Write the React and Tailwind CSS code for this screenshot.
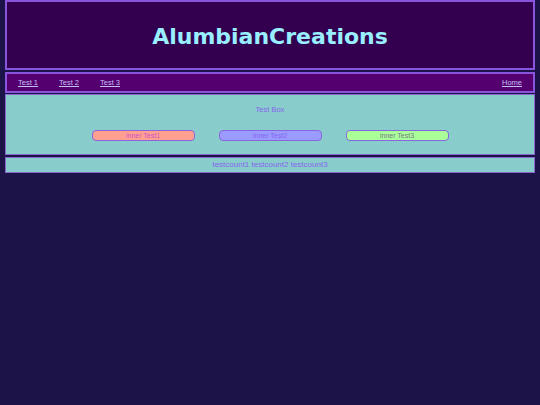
import React from "react";

export default function App() {
  const sans = { fontFamily: '"Liberation Sans", Arial, sans-serif' };
  return (
    <div className="min-h-[405px] w-full bg-[#1c1448]" style={sans}>
      <div className="flex flex-col px-[5px]">
        <div className="h-[70px] border-2 border-[#8a55dd] bg-[#330050] flex items-center justify-center pt-[3px]">
          <h1
            className="text-[22px] font-bold text-[#99eeff] leading-none"
            style={{ fontFamily: '"DejaVu Sans", Verdana, sans-serif' }}
          >
            AlumbianCreations
          </h1>
        </div>
        <div className="mt-[2px] h-[21px] border-2 border-[#8a55dd] bg-[#55006f] flex items-center pl-[11px] pr-[11px] text-[7.5px] text-[#c4bff5]">
          <a href="#" className="underline">Test 1</a>
          <a href="#" className="underline ml-[21px]">Test 2</a>
          <a href="#" className="underline ml-[21px]">Test 3</a>
          <a href="#" className="underline ml-auto">Home</a>
        </div>
        <div className="mt-px h-[61px] border border-[#8866cc] bg-[#88cccc] flex flex-col items-center">
          <div className="mt-[11px] text-[7.5px] leading-[8px] text-[#8866ee]">Test Box</div>
          <div className="mt-[16px] flex gap-[24px]">
            <div className="w-[103px] h-[11px] rounded-[4px] border border-[#8866dd] bg-[#ff9f90] text-[7px] leading-[9px] text-center text-[#cc55cc]">inner Test1</div>
            <div className="w-[103px] h-[11px] rounded-[4px] border border-[#8866dd] bg-[#9a9aff] text-[7px] leading-[9px] text-center text-[#8866ee]">inner Test2</div>
            <div className="w-[103px] h-[11px] rounded-[4px] border border-[#8866dd] bg-[#aaff99] text-[7px] leading-[9px] text-center text-[#777788]">inner Test3</div>
          </div>
        </div>
        <div className="mt-[2px] h-[16px] border border-[#8866cc] bg-[#88cccc] flex items-center justify-center text-[8px] text-[#8866ee]">
          testcount1 testcount2 testcount3
        </div>
      </div>
    </div>
  );
}
